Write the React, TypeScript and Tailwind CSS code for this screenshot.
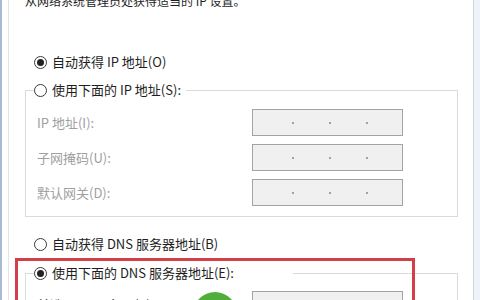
const font = { fontFamily: '"Microsoft YaHei", "Noto Sans CJK SC", "Liberation Sans", sans-serif' }

function Radio({ checked }: { checked?: boolean }) {
  return (
    <span className="flex h-[13px] w-[13px] shrink-0 items-center justify-center rounded-full border border-[#3a3a3a] bg-white">
      {checked && <span className="h-[7px] w-[7px] rounded-full bg-[#222]" />}
    </span>
  )
}

function RadioRow({ checked, label }: { checked?: boolean; label: string }) {
  return (
    <div className="flex h-[16px] items-center gap-[5px] text-[13px] leading-[16px] text-[#1e1e1e]">
      <Radio checked={checked} />
      <span>{label}</span>
    </div>
  )
}

function IpBox() {
  return (
    <div className="flex h-[27px] w-[151px] items-center gap-[35px] border border-[#a3a3a3] bg-[#f0f0f0] pl-[39px]">
      <span className="h-[2px] w-[2px] rounded-full bg-[#8a8a8a]" />
      <span className="h-[2px] w-[2px] rounded-full bg-[#8a8a8a]" />
      <span className="h-[2px] w-[2px] rounded-full bg-[#8a8a8a]" />
    </div>
  )
}

function Field({ label, disabled }: { label: string; disabled?: boolean }) {
  return (
    <div className="flex items-center">
      <span className={`w-[226px] pl-[11px] text-[13px] leading-[16px] ${disabled ? "text-[#a0a0a0]" : "text-[#1e1e1e]"}`}>
        {label}
      </span>
      <IpBox />
    </div>
  )
}

export default function App() {
  return (
    <div className="flex h-[300px] w-[480px] overflow-hidden bg-white" style={font}>
      <div className="w-[2px] bg-[#a7b9d3]" />
      <div className="w-[6px] bg-white" />
      <div className="w-px bg-[#e4e4e4]" />

      <div className="relative flex flex-1 flex-col">
        {/* top hint text, clipped by the window edge */}
        <div className="-mt-[7px] h-[16px] pl-[16px] text-[12px] leading-[16px] text-[#1e1e1e]">
          从网络系统管理员处获得适当的 IP 设置。
        </div>

        <div className="mt-[45px] pl-[25px]">
          <RadioRow checked label="自动获得 IP 地址(O)" />
        </div>

        <fieldset className="ml-[16px] mt-[12px] w-[433px] border border-[#dadada] pb-[10px]">
          <legend className="ml-[8px] pr-[5px]">
            <RadioRow label="使用下面的 IP 地址(S):" />
          </legend>
          <div className="mt-[11px] flex flex-col gap-[8px]">
            <Field disabled label="IP 地址(I):" />
            <Field disabled label="子网掩码(U):" />
            <Field disabled label="默认网关(D):" />
          </div>
        </fieldset>

        <div className="mt-[19px] pl-[25px]">
          <RadioRow label="自动获得 DNS 服务器地址(B)" />
        </div>

        <fieldset className="ml-[16px] mt-[13px] w-[433px] border border-[#dadada] pb-[10px]">
          <legend className="ml-[8px] pr-[59px]">
            <RadioRow checked label="使用下面的 DNS 服务器地址(E):" />
          </legend>
          <div className="mt-[10px] flex flex-col gap-[8px]">
            <Field label="首选 DNS 服务器(P):" />
          </div>
        </fieldset>

        {/* annotations drawn over the dialog */}
        <div className="absolute left-[6px] top-[258px] h-[60px] w-[400px] border-[3px] border-[#d23f48]" />
        <div className="absolute left-[184px] top-[292px] h-[44px] w-[44px] rounded-full bg-[#4fae3a]" />
      </div>

      <div className="w-px bg-[#cfd6de]" />
      <div className="w-[6px] bg-[#eef3f9]" />
    </div>
  )
}
